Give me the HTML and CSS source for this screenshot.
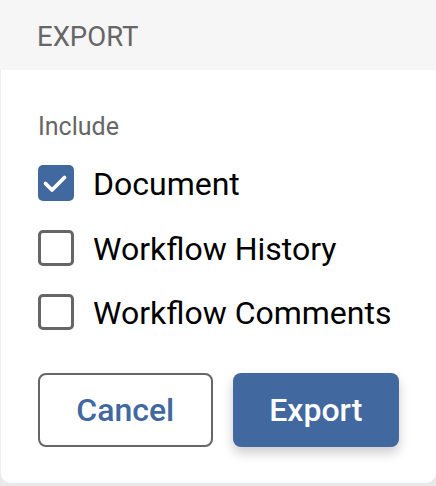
FILE: index.html
```html
<!DOCTYPE html>
<html>
<head>
<meta charset="utf-8">
<link rel="stylesheet" href="styles.css">
</head>
<body>
<div class="dialog">
  <div class="header">EXPORT</div>
  <div class="content">
    <div class="label">Include</div>
    <div class="options">
      <label class="option">
        <span class="box checked">
          <svg viewBox="0 0 36 36" width="36" height="36"><path d="M7.5 18.5l6.5 6.5 12.5-12.5" fill="none" stroke="#fff" stroke-width="3.8" stroke-linecap="round" stroke-linejoin="round"/></svg>
        </span>
        <span class="text">Document</span>
      </label>
      <label class="option">
        <span class="box"></span>
        <span class="text">Workflow History</span>
      </label>
      <label class="option">
        <span class="box"></span>
        <span class="text">Workflow Comments</span>
      </label>
    </div>
    <div class="actions">
      <button class="btn btn-outline">Cancel</button>
      <button class="btn btn-primary">Export</button>
    </div>
  </div>
</div>
</body>
</html>
```
FILE: styles.css
```css
html, body {
  margin: 0;
  padding: 0;
}
body {
  width: 436px;
  height: 486px;
  background: #e9e9e9;
  font-family: Roboto, "Liberation Sans", sans-serif;
  overflow: hidden;
}
.dialog {
  display: flex;
  flex-direction: column;
}
.header {
  height: 70px;
  background: #f6f6f6;
  color: #666666;
  font-size: 27.5px;
  display: flex;
  align-items: center;
  padding-left: 37px;
  padding-top: 2px;
  box-sizing: border-box;
}
.content {
  background: #ffffff;
  height: 413px;
  border-radius: 0 0 10px 10px;
  padding: 42px 37px 0 37px;
  box-sizing: border-box;
  border-left: 1px solid #eeeeee;
}
.label {
  font-size: 25px;
  line-height: 30px;
  color: #666666;
}
.options {
  display: flex;
  flex-direction: column;
  margin-top: 9px;
}
.option {
  display: flex;
  align-items: center;
  height: 64.5px;
}
.box {
  width: 36px;
  height: 36px;
  box-sizing: border-box;
  border: 3.5px solid #666666;
  border-radius: 5px;
  display: flex;
  align-items: center;
  justify-content: center;
  flex: none;
  position: relative;
}
.box svg {
  position: absolute;
  left: 0;
  top: 0;
}
.box.checked {
  background: #41689f;
  border: none;
}
.text {
  margin-left: 19px;
  font-size: 32px;
  color: #000000;
  padding-top: 2px;
}
.actions {
  display: flex;
  gap: 20px;
  margin-top: 28px;
}
.btn {
  height: 74px;
  border-radius: 8px;
  font-family: Roboto, "Liberation Sans", sans-serif;
  font-size: 32px;
  font-weight: 500;
  box-sizing: border-box;
  cursor: pointer;
}
.btn-outline {
  width: 175px;
  background: #ffffff;
  border: 2px solid #666666;
  color: #41689f;
}
.btn-primary {
  width: 167px;
  background: #41689f;
  border: none;
  color: #ffffff;
  box-shadow: 0 6px 12px rgba(0, 0, 0, 0.2);
}
```
